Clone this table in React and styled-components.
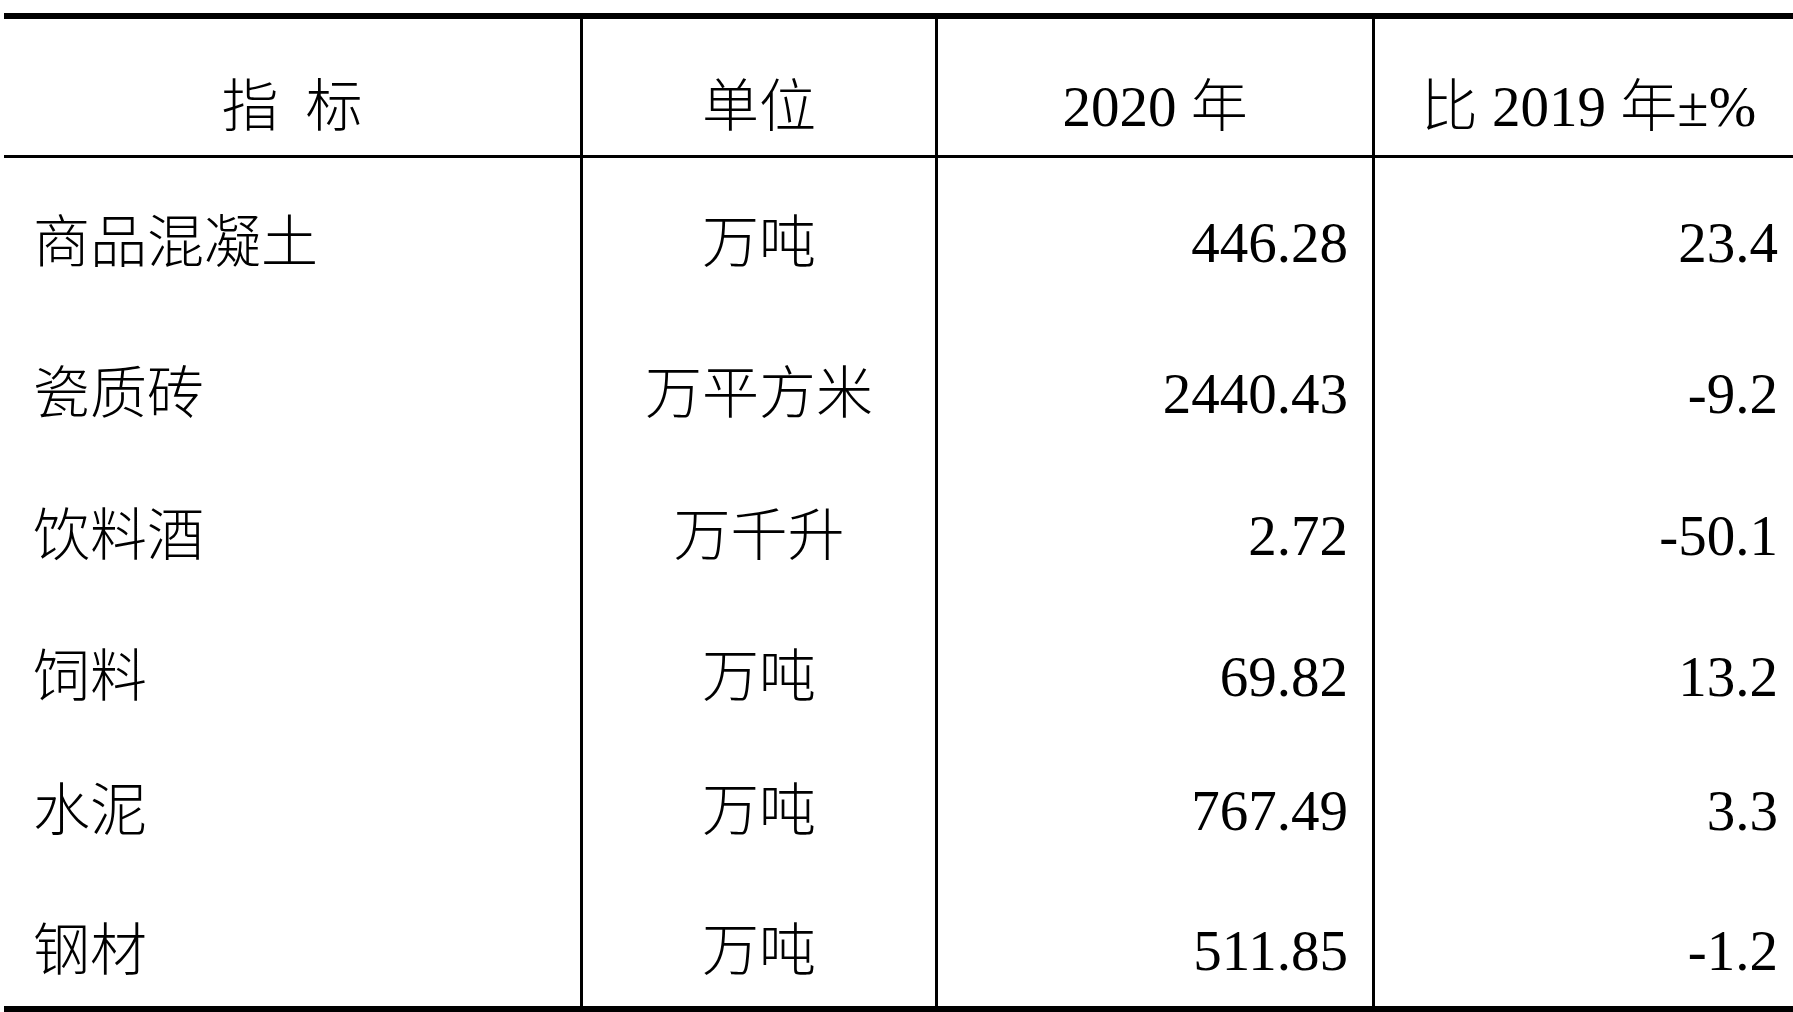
import React from 'react'
import styled, { createGlobalStyle } from 'styled-components'

const GlobalStyle = createGlobalStyle`
  html, body {
    margin: 0;
    padding: 0;
    background: #fff;
    overflow: hidden;
  }
`

const rows = [
  { name: '商品混凝土', unit: '万吨', value: '446.28', change: '23.4', height: 140 },
  { name: '瓷质砖', unit: '万平方米', value: '2440.43', change: '-9.2', height: 151 },
  { name: '饮料酒', unit: '万千升', value: '2.72', change: '-50.1', height: 142 },
  { name: '饲料', unit: '万吨', value: '69.82', change: '13.2', height: 141 },
  { name: '水泥', unit: '万吨', value: '767.49', change: '3.3', height: 134 },
  { name: '钢材', unit: '万吨', value: '511.85', change: '-1.2', height: 140 },
]

function App() {
  return (
    <>
      <GlobalStyle />
      <Table>
        <Row height={136} head>
          <Cell align="center" spaced>指 标</Cell>
          <Cell align="center" divider>单位</Cell>
          <Cell align="center" divider>2020 年</Cell>
          <Cell align="center" divider>比 2019 年±%</Cell>
        </Row>
        {rows.map((r) => (
          <Row key={r.name} height={r.height}>
            <Cell align="start">{r.name}</Cell>
            <Cell align="center" divider>{r.unit}</Cell>
            <Cell align="end" divider>{r.value}</Cell>
            <Cell align="end" divider>{r.change}</Cell>
          </Row>
        ))}
      </Table>
    </>
  )
}

const Table = styled.div`
  margin: 13px 0 0 4px;
  width: 1798px;
  border-top: 6px solid #000;
  border-bottom: 6px solid #000;
  font-family: "Liberation Serif", "Noto Sans CJK SC", serif;
  font-size: 57px;
  font-weight: 300;
  line-height: 60px;
  color: #000;
`

const Row = styled.div`
  display: grid;
  grid-template-columns: 576px 355px 437px 1fr;
  height: ${(p) => p.height}px;
  border-bottom: ${(p) => (p.head ? '3px solid #000' : 'none')};
  --pad-bottom: ${(p) => (p.head ? '18px' : '25px')};
`

const Cell = styled.div`
  display: flex;
  align-items: flex-end;
  justify-content: ${(p) => (p.align === 'start' ? 'flex-start' : p.align === 'end' ? 'flex-end' : 'center')};
  padding: 0 24px var(--pad-bottom) ${(p) => (p.align === 'start' ? '29px' : '0')};
  border-left: ${(p) => (p.divider ? '3px solid #000' : 'none')};
  white-space: nowrap;
  word-spacing: ${(p) => (p.spaced ? '13px' : 'normal')};
  ${(p) => p.align === 'center' && 'padding-right: 0;'}
`

export default App
